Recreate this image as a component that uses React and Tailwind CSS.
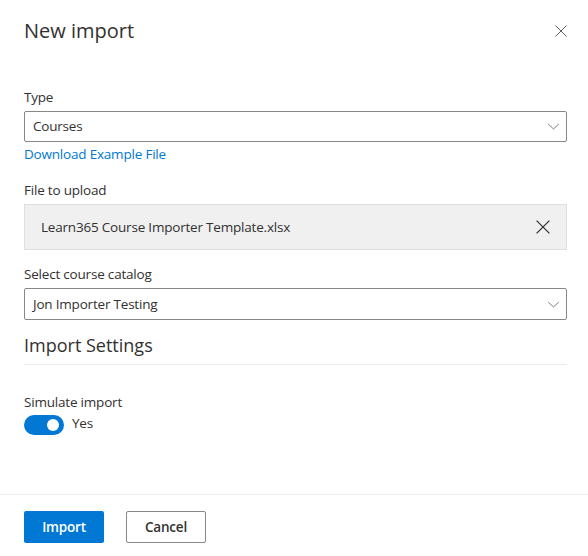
import React from "react";

const font = { fontFamily: '"Segoe UI", "Open Sans", sans-serif' };

function Chevron() {
  return (
    <svg width="13" height="13" viewBox="0 0 16 16" fill="none" stroke="#605e5c" strokeWidth="1">
      <path d="M1.5 5 L8 11 L14.5 5" />
    </svg>
  );
}

function XIcon({ size = 12, color = "#605e5c", sw = 1 }) {
  return (
    <svg width={size} height={size} viewBox="0 0 12 12" fill="none" stroke={color} strokeWidth={sw}>
      <path d="M0.5 0.5 L11.5 11.5 M11.5 0.5 L0.5 11.5" />
    </svg>
  );
}

function Label({ children }) {
  return (
    <div className="text-[13.5px] tracking-[-0.2px] font-medium text-[#323130] leading-[20px] pb-[4px]">
      {children}
    </div>
  );
}

export default function App() {
  return (
    <div className="w-[588px] h-[556px] bg-white flex flex-col text-[#323130]" style={font}>
      <div className="flex-1 pl-6 pr-[21px]">
        <div className="flex items-center justify-between h-[28px] mt-[17px]">
          <div className="text-[20px] font-normal leading-[28px] text-[#323130]">New import</div>
          <div className="mr-[0px]">
            <XIcon size={12} color="#605e5c" />
          </div>
        </div>
        <div className="mt-[42px]">
          <Label>Type</Label>
          <div className="h-[31px] border border-[#8a8886] rounded-[2px] flex items-center justify-between pl-2 pr-[6px]">
            <span className="text-[13.5px] tracking-[-0.2px]">Courses</span>
            <Chevron />
          </div>
          <div className="text-[13.5px] tracking-[-0.2px] text-[#0078d4] leading-[20px] mt-[2px]">
            Download Example File
          </div>
        </div>
        <div className="mt-[16px]">
          <Label>File to upload</Label>
          <div className="h-[46px] bg-[#f0f0f0] border border-[#e1dfdd] flex items-center justify-between pl-4 pr-[16px]">
            <span className="text-[13.5px] tracking-[-0.2px]">Learn365 Course Importer Template.xlsx</span>
            <XIcon size={14} color="#323130" sw={1.1} />
          </div>
        </div>
        <div className="mt-[14px]">
          <Label>Select course catalog</Label>
          <div className="h-[32px] border border-[#8a8886] rounded-[2px] flex items-center justify-between pl-2 pr-[6px]">
            <span className="text-[13.5px] tracking-[-0.2px]">Jon Importer Testing</span>
            <Chevron />
          </div>
        </div>
        <div className="mt-[12px] text-[18px] font-normal leading-[26px] pb-[6px] border-b border-[#edebe9]">
          Import Settings
        </div>
        <div className="mt-[27px]">
          <div className="text-[13.5px] tracking-[-0.2px] font-medium leading-[20px] text-[#323130]">Simulate import</div>
          <div className="flex items-start gap-2 mt-[3px]">
            <div className="w-[40px] h-[20px] rounded-full bg-[#0078d4] flex items-center justify-end pr-[5px]">
              <div className="w-[12px] h-[12px] rounded-full bg-white" />
            </div>
            <span className="text-[13.5px] tracking-[-0.2px] leading-[17px]">Yes</span>
          </div>
        </div>
      </div>
      <div className="border-t border-[#edebe9] h-[62px] px-6 flex items-start pt-[16px] gap-[22px]">
        <button className="w-[80px] h-[32px] bg-[#0078d4] text-white text-[13.5px] tracking-[-0.2px] font-semibold rounded-[2px]">
          Import
        </button>
        <button className="w-[80px] h-[32px] border border-[#8a8886] text-[#323130] text-[13.5px] tracking-[-0.2px] font-semibold rounded-[2px] bg-white">
          Cancel
        </button>
      </div>
    </div>
  );
}
